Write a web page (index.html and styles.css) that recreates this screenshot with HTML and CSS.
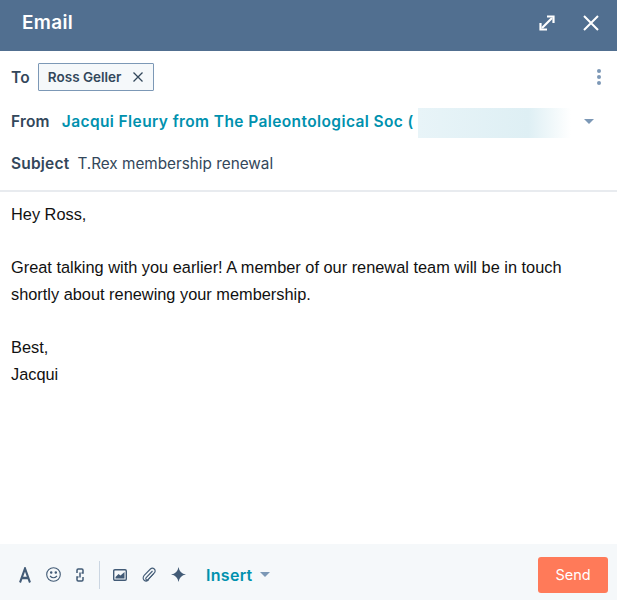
FILE: index.html
```html
<!DOCTYPE html>
<html lang="en">

<head>
    <meta name="viewport" content="width=device-width, initial-scale=1.0">
    <link rel="stylesheet" href="styles.css">
</head>

<body>
    <div class="composer">
        <div class="title-bar">
            <span class="title">Email</span>
            <div class="title-actions">
                <svg class="icon-expand" width="16" height="16" viewBox="0 0 16 16" fill="none" stroke="#fff" stroke-width="2.2">
                    <path d="M3 13 13 3" />
                    <path d="M8 1.5H14.5V8" />
                    <path d="M1.5 8V14.5H8" />
                </svg>
                <svg class="icon-close" width="16" height="16" viewBox="0 0 16 16" fill="none" stroke="#fff" stroke-width="2">
                    <path d="M1 1 15 15M15 1 1 15" />
                </svg>
            </div>
        </div>

        <div class="fields">
            <div class="field-row to-row">
                <span class="field-label">To</span>
                <span class="chip">Ross Geller
                    <svg width="10" height="10" viewBox="0 0 10 10" fill="none" stroke="#33475b" stroke-width="1.3">
                        <path d="M.5.5 9.5 9.5M9.5.5.5 9.5" />
                    </svg>
                </span>
                <span class="more-dots"><i></i><i></i><i></i></span>
            </div>
            <div class="field-row from-row">
                <span class="field-label">From</span>
                <span class="from-value">Jacqui Fleury from The Paleontological Soc (</span>
                <span class="blurred"></span>
                <span class="caret from-caret"></span>
            </div>
            <div class="field-row subject-row">
                <span class="field-label">Subject</span>
                <span class="subject-value">T.Rex membership renewal</span>
            </div>
        </div>

        <div class="message">
            <p>Hey Ross,</p>
            <p>Great talking with you earlier! A member of our renewal team will be in touch shortly about renewing your membership.</p>
            <p>Best,<br>Jacqui</p>
        </div>

        <div class="toolbar">
            <div class="tools">
                <!-- text style -->
                <svg width="12" height="16" viewBox="0 0 14 16" preserveAspectRatio="none" fill="none" stroke="#425b76" stroke-width="2.4">
                    <path d="M1.2 15.5 7 1.5 12.8 15.5M3 11H11" />
                </svg>
                <!-- emoji -->
                <svg width="15" height="15" viewBox="0 0 15 15" fill="none" stroke="#425b76" stroke-width="1.1">
                    <circle cx="7.5" cy="7.5" r="6.8" />
                    <path d="M4 9Q7.5 12.5 11 9" />
                    <circle cx="5.2" cy="5.6" r=".7" fill="#425b76" />
                    <circle cx="9.8" cy="5.6" r=".7" fill="#425b76" />
                </svg>
                <!-- link -->
                <svg width="8" height="14" viewBox="0 0 8 14" fill="none" stroke="#425b76" stroke-width="1.5">
                    <path d="M1 5V2.2Q1 1 2.2 1H5.8Q7 1 7 2.2V5H5.5" />
                    <path d="M7 9V11.8Q7 13 5.8 13H2.2Q1 13 1 11.8V9H2.5" />
                    <path d="M4 4.5V9.5" />
                </svg>
                <span class="divider"></span>
                <!-- image -->
                <svg width="14" height="12" viewBox="0 0 14 12">
                    <rect x=".7" y=".7" width="12.6" height="10.6" rx="1.2" fill="none" stroke="#425b76" stroke-width="1.4" />
                    <path d="M2.5 9.5V8L5.5 5 7.5 6.5 11.5 3V9.5Z" fill="#425b76" />
                </svg>
                <!-- attachment -->
                <svg width="14" height="15" viewBox="0 0 14 15" fill="none" stroke="#425b76" stroke-width="1.1">
                    <path d="M10.5 4 4.2 10.6Q3.2 12 4.3 12.7 5.3 13.4 6.5 12.2L12.3 6Q14 3.8 12.3 2 10.4.3 8.4 2L2.2 8.4Q.3 10.8 1.9 13 4 15 6.6 13.4" />
                    <path d="M11.8 6.5 5.8 13" />
                </svg>
                <!-- sparkle -->
                <svg width="15" height="15" viewBox="0 0 15 15">
                    <path d="M7.5 0Q8.5 6.5 15 7.5 8.5 8.5 7.5 15 6.5 8.5 0 7.5 6.5 6.5 7.5 0Z" fill="#425b76" />
                </svg>
                <span class="insert">Insert</span>
                <span class="caret insert-caret"></span>
            </div>
            <button class="send">Send</button>
        </div>
    </div>
</body>

</html>
```
FILE: styles.css
```css
html,
body {
    margin: 0;
    height: 100%;
}

body {
    font-family: "Inter", "Lato", sans-serif;
    color: #33475b;
    background: #fff;
}

.composer {
    display: flex;
    flex-direction: column;
    height: 600px;
    overflow: hidden;
}

.title-bar {
    flex: 0 0 51px;
    display: flex;
    align-items: center;
    justify-content: space-between;
    padding: 0 18px 6px 22px;
    box-sizing: border-box;
    background: #516f90;
    color: #fff;
}

.title {
    font-size: 19px;
    font-weight: 600;
    letter-spacing: 0.3px;
}

.title-actions {
    display: flex;
    align-items: center;
    gap: 28px;
}

.fields {
    flex: 0 0 141px;
    box-sizing: border-box;
    padding-left: 11px;
    border-bottom: 2px solid #e8ebef;
}

.field-row {
    display: flex;
    align-items: center;
}

.to-row {
    height: 28px;
    margin-top: 12px;
    gap: 8px;
}

.from-row {
    height: 30px;
    margin-top: 15px;
    gap: 12px;
}

.subject-row {
    height: 24px;
    margin-top: 15px;
    gap: 8px;
}

.field-label {
    font-size: 15.5px;
    font-weight: 600;
    letter-spacing: 0.2px;
}

.chip {
    display: flex;
    align-items: center;
    gap: 12px;
    height: 26px;
    padding: 0 10px 0 9px;
    border: 1px solid #7c98b6;
    border-radius: 1px;
    background: #f5f8fa;
    font-size: 13.5px;
    font-weight: 600;
}

.more-dots {
    display: flex;
    flex-direction: column;
    gap: 2px;
    margin-left: auto;
    margin-right: 16px;
}

.more-dots i {
    width: 4px;
    height: 4px;
    border-radius: 50%;
    background: #7c98b6;
}

.from-value {
    font-size: 15.5px;
    font-weight: 600;
    letter-spacing: 0.4px;
    color: #0091ae;
    white-space: nowrap;
}

.blurred {
    flex: 0 0 153px;
    height: 30px;
    margin: 4px 0 0 -8px;
    background: linear-gradient(90deg, #e8f4f8, #deeff4 72%, #fff);
}

.caret {
    width: 0;
    height: 0;
    border-left: 5px solid transparent;
    border-right: 5px solid transparent;
    border-top: 5px solid #7c98b6;
}

.from-caret {
    margin-left: 1px;
}

.subject-value {
    font-size: 15.3px;
}

.message {
    flex: 1;
    padding: 9px 30px 0 11px;
    font-family: "Liberation Sans", Arial, sans-serif;
    font-size: 16.35px;
    line-height: 26.7px;
    color: #111;
}

.message p {
    margin: 0 0 26.7px;
}

.toolbar {
    flex: 0 0 56px;
    display: flex;
    align-items: center;
    justify-content: space-between;
    padding: 5px 9px 0 19px;
    box-sizing: border-box;
    background: #f5f8fa;
}

.tools {
    display: flex;
    align-items: center;
    gap: 15px;
}

.divider {
    width: 1px;
    height: 28px;
    margin-right: -2px;
    background: #cbd6e2;
}

.insert {
    margin-left: 5px;
    font-size: 16px;
    font-weight: 600;
    letter-spacing: 0.3px;
    color: #0091ae;
}

.insert-caret {
    margin-left: -8px;
}

.send {
    width: 70px;
    height: 36px;
    border: 0;
    border-radius: 3px;
    background: #ff7a59;
    color: #fff;
    font-family: inherit;
    font-size: 14.5px;
}
```
